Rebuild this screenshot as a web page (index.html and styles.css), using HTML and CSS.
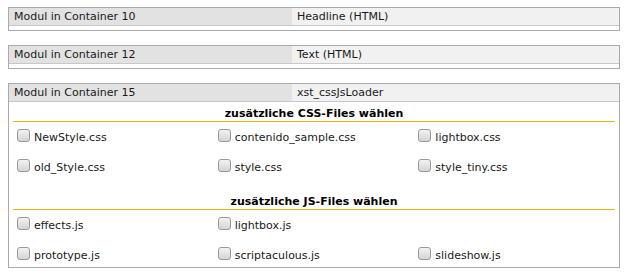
FILE: index.html
```html
<!DOCTYPE html>
<html lang="de">
<head>
  <meta charset="UTF-8">
  <title>Container</title>
  <link rel="stylesheet" href="styles.css">
</head>
<body>
  <div class="module">
    <div class="moduleHead">
      <div class="modName">Modul in Container 10</div>
      <div class="modType">Headline (HTML)</div>
    </div>
    <div class="moduleBody"></div>
  </div>

  <div class="module">
    <div class="moduleHead">
      <div class="modName">Modul in Container 12</div>
      <div class="modType">Text (HTML)</div>
    </div>
    <div class="moduleBody"></div>
  </div>

  <div class="module last">
    <div class="moduleHead">
      <div class="modName">Modul in Container 15</div>
      <div class="modType">xst_cssJsLoader</div>
    </div>
    <div class="moduleBody loader">
      <div class="fileHead">zusätzliche CSS-Files wählen</div>
      <div class="fileList">
        <label class="file"><input type="checkbox"> NewStyle.css</label>
        <label class="file"><input type="checkbox"> contenido_sample.css</label>
        <label class="file"><input type="checkbox"> lightbox.css</label>
        <label class="file"><input type="checkbox"> old_Style.css</label>
        <label class="file"><input type="checkbox"> style.css</label>
        <label class="file"><input type="checkbox"> style_tiny.css</label>
      </div>

      <div class="fileHead js">zusätzliche JS-Files wählen</div>
      <div class="fileList">
        <label class="file"><input type="checkbox"> effects.js</label>
        <label class="file"><input type="checkbox"> lightbox.js</label>
        <label class="file"></label>
        <label class="file"><input type="checkbox"> prototype.js</label>
        <label class="file"><input type="checkbox"> scriptaculous.js</label>
        <label class="file"><input type="checkbox"> slideshow.js</label>
      </div>
    </div>
  </div>
</body>
</html>
```

FILE: styles.css
```css
* {
  box-sizing: border-box;
}

body {
  margin: 7px 8px 0 8px;
  font-family: "DejaVu Sans", Verdana, sans-serif;
  font-size: 11px;
  color: #1a1a1a;
  background-color: #fff;
}

.module {
  width: 612px;
  border: 1px solid #aaa;
  margin-bottom: 14px;
}
.module.last {
  margin-bottom: 0;
}

.moduleHead {
  display: flex;
  height: 18px;
  line-height: 17px;
  border-bottom: 1px solid #c8c8c8;
}
.modName {
  width: 283px;
  padding-left: 5px;
  background-color: #e2e2e2;
}
.modType {
  flex: 1;
  padding-left: 5px;
  background-color: #f1f1f1;
}

.moduleBody {
  height: 4px;
}

.loader {
  height: auto;
  padding: 5px 4px 4px 4px;
}

.fileHead {
  text-align: center;
  font-weight: bold;
  line-height: 14px;
  color: #000;
  border-bottom: 1px solid #e8b60e;
}
.fileHead.js {
  margin-top: 20px;
}

.fileList {
  display: grid;
  grid-template-columns: repeat(3, 1fr);
  row-gap: 14px;
  padding-top: 7px;
}

.file {
  display: flex;
  align-items: center;
  height: 16px;
}
.file input {
  appearance: none;
  width: 13px;
  height: 13px;
  margin: -3px 4px 0 4px;
  border: 1px solid #999;
  border-radius: 3px;
  background: linear-gradient(#f2f2f2, #d4d4d4);
}
```
